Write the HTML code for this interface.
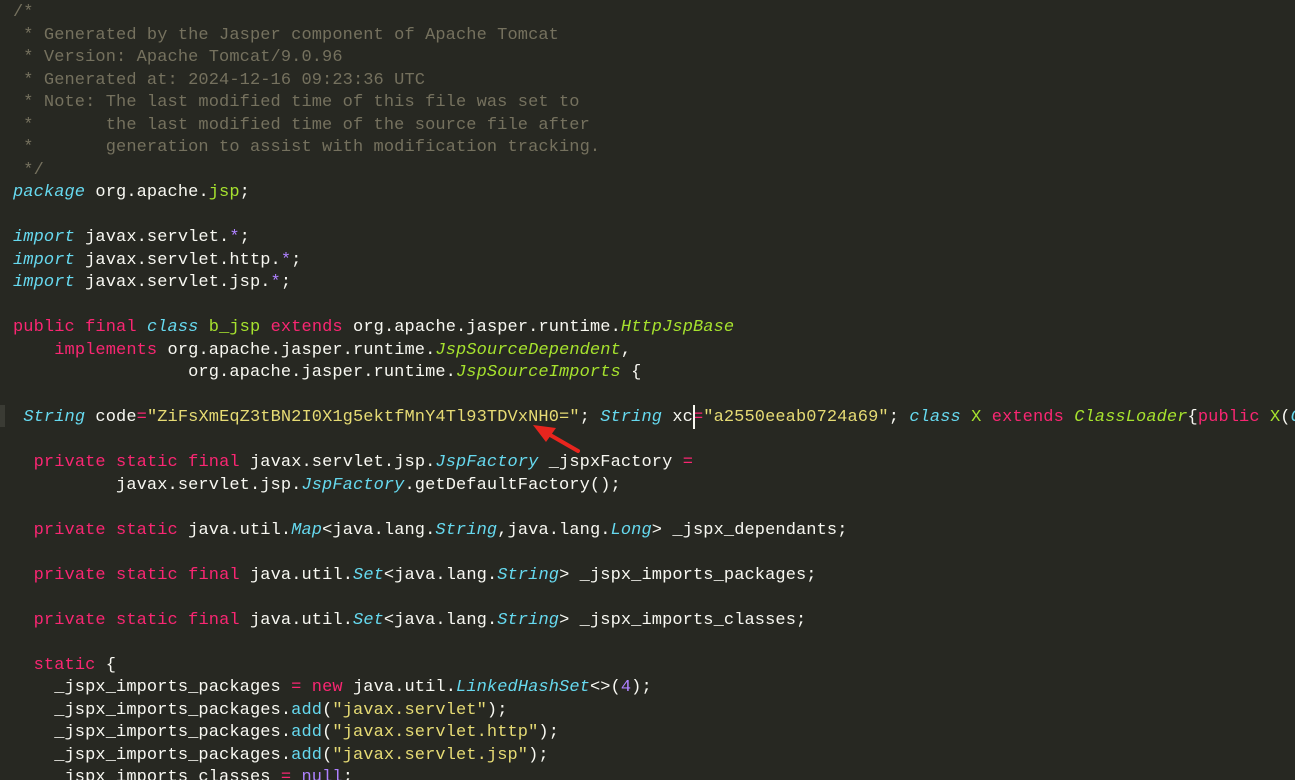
<!DOCTYPE html>
<html><head><meta charset="utf-8"><style>
html,body{margin:0;padding:0;background:#272822;width:1295px;height:778px;overflow:hidden}
pre{position:absolute;left:13px;top:2px;width:1282px;height:778px;overflow:hidden;margin:0;font-family:"Liberation Mono","DejaVu Sans Mono",monospace;font-size:17px;letter-spacing:0.1px;line-height:22.5px;color:#f8f8f2;white-space:pre}
.c{color:#75715e}.k{color:#f92672}.t{color:#66d9ef;font-style:italic}.g{color:#a6e22e}.gi{color:#a6e22e;font-style:italic}
.s{color:#e6db74}.n{color:#ae81ff}.f{color:#66d9ef}
.cur{position:absolute;left:693px;top:405px;width:2px;height:24px;background:#f8f8f0}
.mark{position:absolute;left:0;top:405px;width:5px;height:22px;background:#3a3b34}
</style></head><body>
<div class="mark"></div>
<pre><span class="c">/*
 * Generated by the Jasper component of Apache Tomcat
 * Version: Apache Tomcat/9.0.96
 * Generated at: 2024-12-16 09:23:36 UTC
 * Note: The last modified time of this file was set to
 *       the last modified time of the source file after
 *       generation to assist with modification tracking.
 */</span>
<span class="t">package</span> org.apache.<span class="g">jsp</span>;

<span class="t">import</span> javax.servlet.<span class="n">*</span>;
<span class="t">import</span> javax.servlet.http.<span class="n">*</span>;
<span class="t">import</span> javax.servlet.jsp.<span class="n">*</span>;

<span class="k">public</span> <span class="k">final</span> <span class="t">class</span> <span class="g">b_jsp</span> <span class="k">extends</span> org.apache.jasper.runtime.<span class="gi">HttpJspBase</span>
    <span class="k">implements</span> org.apache.jasper.runtime.<span class="gi">JspSourceDependent</span>,
                 org.apache.jasper.runtime.<span class="gi">JspSourceImports</span> {

 <span class="t">String</span> code<span class="k">=</span><span class="s">"ZiFsXmEqZ3tBN2I0X1g5ektfMnY4Tl93TDVxNH0="</span>; <span class="t">String</span> xc<span class="k">=</span><span class="s">"a2550eeab0724a69"</span>; <span class="t">class</span> <span class="g">X</span> <span class="k">extends</span> <span class="gi">ClassLoader</span>{<span class="k">public</span> <span class="g">X</span>(<span class="t">C</span>

  <span class="k">private</span> <span class="k">static</span> <span class="k">final</span> javax.servlet.jsp.<span class="t">JspFactory</span> _jspxFactory <span class="k">=</span>
          javax.servlet.jsp.<span class="t">JspFactory</span>.getDefaultFactory();

  <span class="k">private</span> <span class="k">static</span> java.util.<span class="t">Map</span>&lt;java.lang.<span class="t">String</span>,java.lang.<span class="t">Long</span>&gt; _jspx_dependants;

  <span class="k">private</span> <span class="k">static</span> <span class="k">final</span> java.util.<span class="t">Set</span>&lt;java.lang.<span class="t">String</span>&gt; _jspx_imports_packages;

  <span class="k">private</span> <span class="k">static</span> <span class="k">final</span> java.util.<span class="t">Set</span>&lt;java.lang.<span class="t">String</span>&gt; _jspx_imports_classes;

  <span class="k">static</span> {
    _jspx_imports_packages <span class="k">=</span> <span class="k">new</span> java.util.<span class="t">LinkedHashSet</span>&lt;&gt;(<span class="n">4</span>);
    _jspx_imports_packages.<span class="f">add</span>(<span class="s">"javax.servlet"</span>);
    _jspx_imports_packages.<span class="f">add</span>(<span class="s">"javax.servlet.http"</span>);
    _jspx_imports_packages.<span class="f">add</span>(<span class="s">"javax.servlet.jsp"</span>);
    _jspx_imports_classes <span class="k">=</span> <span class="n">null</span>;
</pre>
<div class="cur"></div>
<svg style="position:absolute;left:0;top:0" width="1295" height="778">
<line x1="578" y1="451" x2="545" y2="432" stroke="#e8251e" stroke-width="4" stroke-linecap="round"/>
<polygon points="533,425 556,428 546,442" fill="#e8251e"/>
</svg>
</body></html>
